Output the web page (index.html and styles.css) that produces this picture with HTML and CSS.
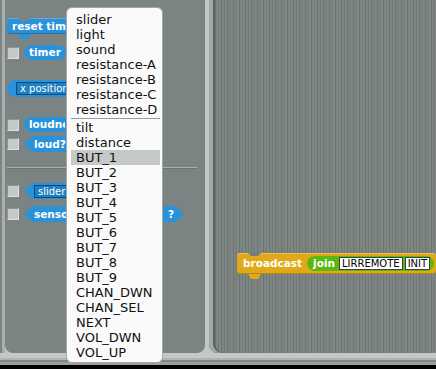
FILE: index.html
```html
<!DOCTYPE html>
<html>
<head>
<meta charset="utf-8">
<link rel="stylesheet" href="styles.css">
</head>
<body>
<div class="screen">
  <div class="main">
    <div class="palette">
      <div class="cmd reset"><span class="clip c-reset">reset timer</span></div>
      <div class="row r-timer"><span class="check"></span><span class="rep">timer</span></div>
      <div class="rep xpos"><span class="drop">x position</span></div>
      <div class="row r-loudness"><span class="check"></span><span class="rep loudness"><span class="clip c-loud">loudness</span></span></div>
      <div class="row r-loud"><span class="check"></span><span class="bool">loud?</span></div>
      <div class="sep"></div>
      <div class="row r-slider"><span class="check"></span><span class="bool slider"><span class="drop">slider</span></span></div>
      <div class="row r-sensor"><span class="check"></span><span class="bool sensor"><span class="clip c-sensor">sensor</span><span>?</span></span></div>
    </div>
    <div class="scripts">
      <div class="cmd broadcast">broadcast <span class="rep join">join <span class="slot">LIRREMOTE</span><span class="slot">INIT</span></span></div>
    </div>
  </div>
  <div class="bottom"></div>
</div>
<div class="menu">
  <div class="item">slider</div>
  <div class="item">light</div>
  <div class="item">sound</div>
  <div class="item">resistance-A</div>
  <div class="item">resistance-B</div>
  <div class="item">resistance-C</div>
  <div class="item">resistance-D</div>
  <div class="msep"></div>
  <div class="item">tilt</div>
  <div class="item">distance</div>
  <div class="item hl">BUT_1</div>
  <div class="item">BUT_2</div>
  <div class="item">BUT_3</div>
  <div class="item">BUT_4</div>
  <div class="item">BUT_5</div>
  <div class="item">BUT_6</div>
  <div class="item">BUT_7</div>
  <div class="item">BUT_8</div>
  <div class="item">BUT_9</div>
  <div class="item">CHAN_DWN</div>
  <div class="item">CHAN_SEL</div>
  <div class="item">NEXT</div>
  <div class="item">VOL_DWN</div>
  <div class="item">VOL_UP</div>
</div>
</body>
</html>
```

FILE: styles.css
```css
body {
  margin: 0;
  width: 436px;
  height: 369px;
  overflow: hidden;
  position: relative;
  background: linear-gradient(90deg, #7d8583 0 2px, #a9aeae 2px 5px, #c2c6c6 5px);
  font-family: "DejaVu Sans", sans-serif;
}
.screen {
  height: 369px;
  display: flex;
  flex-direction: column;
}
.main {
  display: flex;
  height: 353px;
  padding-left: 5px;
}
.palette {
  --bg: #7b8482;
  width: 200px;
  flex: none;
  background: var(--bg);
  border-radius: 0 0 8px 8px;
  display: flex;
  flex-direction: column;
  align-items: flex-start;
  padding-left: 2px;
  box-sizing: border-box;
}
.scripts {
  --bg: #767e7c;
  flex: 1;
  margin-left: 4px;
  position: relative;
  border-radius: 0 0 0 9px;
  background: repeating-linear-gradient(90deg, #6b7270 0 1px, #7d8583 1px 3px, #727977 3px 4px, #808886 4px 6px);
  box-shadow: inset 4px 0 0 #a2a7a7, inset 6px 0 0 #5b6261;
}
.bottom {
  flex: 1;
  background: linear-gradient(#c4c8c8 0 5px, #afb3b3 5px 7px, #818686 7px 9px, #9a9f9f 9px 12px, #000 12px);
}

/* blocks */
.cmd, .rep, .bool {
  color: #fff;
  font: bold 10.5px/16px "DejaVu Sans", sans-serif;
  white-space: nowrap;
  background: #2a92da;
}
.clip {
  display: inline-block;
  overflow: hidden;
  vertical-align: top;
  white-space: nowrap;
}
.c-reset { width: 54px; }
.c-loud { width: 36px; }
.c-sensor { width: 32px; }
.cmd {
  position: relative;
  height: 16px;
  border-radius: 3px;
  padding: 0 5px;
  box-shadow: inset 0 1px 0 rgba(255,255,255,0.25), inset 0 -1px 0 rgba(0,0,0,0.2);
}
.cmd::before {
  content: "";
  position: absolute;
  top: 0;
  left: 11px;
  width: 13px;
  height: 3px;
  background: var(--bg);
  clip-path: polygon(0 0, 100% 0, calc(100% - 3px) 100%, 3px 100%);
}
.cmd::after {
  content: "";
  position: absolute;
  top: 100%;
  left: 11px;
  width: 13px;
  height: 5px;
  background: inherit;
  clip-path: polygon(0 0, 100% 0, calc(100% - 3px) 100%, 3px 100%);
}
.reset {
  margin-top: 18px;
  width: 100px;
}
.rep {
  height: 15px;
  line-height: 15px;
  border-radius: 8px;
  padding: 0 5px;
}
.loudness { width: 60px; }
.bool {
  height: 16px;
  line-height: 16px;
  padding: 0 10px;
  display: flex;
  align-items: center;
  gap: 4px;
  clip-path: polygon(0 50%, 8px 0, calc(100% - 8px) 0, 100% 50%, calc(100% - 8px) 100%, 8px 100%);
}
.slider { width: 90px; }
.sensor {
  width: 160px;
  box-sizing: border-box;
  justify-content: space-between;
}
.row {
  display: flex;
  align-items: center;
}
.check {
  width: 12px;
  height: 12px;
  box-sizing: border-box;
  background: #c5c9c9;
  border: 1px solid #8e9393;
  border-right-color: #dfe2e2;
  border-bottom-color: #dfe2e2;
  margin-right: 5px;
  flex: none;
}
.r-timer { margin-top: 11px; }
.xpos {
  margin-top: 20px;
  width: 90px;
  height: 17px;
  display: flex;
  align-items: center;
  padding: 0 5px 0 9px;
  border-radius: 9px;
}
.r-loudness { margin-top: 20px; }
.r-loud { margin-top: 4px; }
.sep {
  margin-top: 15px;
  width: 190px;
  height: 1px;
  background: #aab0af;
  box-shadow: 0 1px 0 #6c7472;
}
.r-slider { margin-top: 15px; }
.r-sensor { margin-top: 7px; }
.drop {
  display: inline-block;
  height: 11px;
  line-height: 11px;
  padding: 0 3px;
  background: #1e7fc2;
  border: 1px solid #0e4a74;
  font: 10px/11px "DejaVu Sans", sans-serif;
  color: #fff;
}
.xpos .drop { width: 60px; }
.slider .drop { width: 50px; }

/* scripts canvas */
.broadcast {
  position: absolute;
  left: 28px;
  top: 253px;
  height: 21px;
  line-height: 21px;
  display: flex;
  align-items: center;
  gap: 5px;
  padding: 0 2px 0 6px;
  background: #e1a91a;
}
.join {
  display: flex;
  align-items: center;
  gap: 4px;
  background: #5cb712;
  padding: 0 4px 0 6px;
}
.slot {
  height: 11px;
  box-sizing: content-box;
  background: #fff;
  border: 1px solid #404040;
  color: #000;
  font: 10px/11px "DejaVu Sans", sans-serif;
  padding: 0 2px;
}
.slot + .slot { margin-left: -2px; }

/* popup menu */
.menu {
  position: absolute;
  left: 66px;
  top: 7px;
  width: 97px;
  height: 356px;
  box-sizing: border-box;
  background: #fafafa;
  border: 1px solid #a3a7a7;
  border-radius: 6px;
  padding: 4px 2px 0 4px;
  font: 13px/15px "DejaVu Sans", sans-serif;
  color: #111;
}
.item {
  height: 15px;
  padding-left: 5px;
  white-space: nowrap;
}
.hl { background: #c6cac6; }
.msep {
  height: 1px;
  background: #9a9e9e;
  margin: 1px 0;
}
```
